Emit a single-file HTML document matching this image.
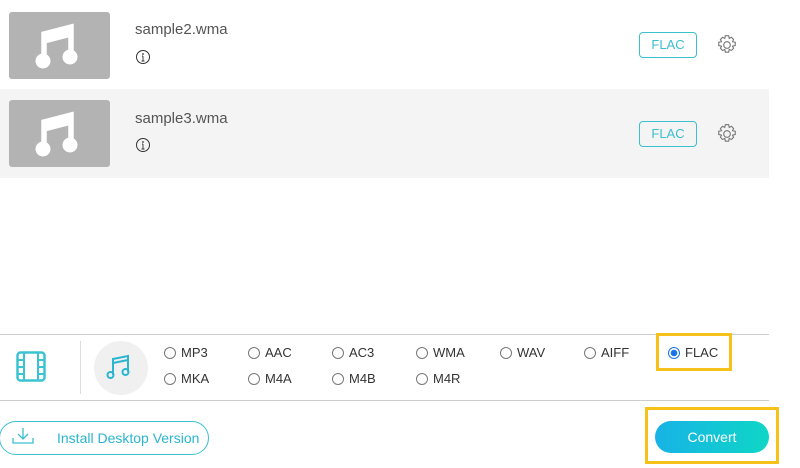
<!DOCTYPE html>
<html><head><style>
body{margin:0;width:800px;height:468px;background:#fff;font-family:"Liberation Sans",sans-serif;position:relative;overflow:hidden}
.a{position:absolute}
.thumb{position:absolute;left:9px;width:101px;height:67px;background:#b3b3b3;border-radius:3px}
.fn{position:absolute;left:135px;font-size:15px;color:#555}
.badge{position:absolute;left:639px;width:56px;height:24px;border:1px solid #3cbfcf;border-radius:4px;color:#3cbfcf;font-size:13px;text-align:center;line-height:24px}
.r{position:absolute;font-size:13px;color:#333}
.r i{position:absolute;left:-17px;top:2px;width:10px;height:10px;border:1px solid #777;border-radius:50%}
</style></head><body>
<div class="a" style="left:0;top:89px;width:769px;height:89px;background:#f4f4f4"></div>

<div class="thumb" style="top:12px"></div>
<div class="thumb" style="top:100px"></div>
<svg class="a" style="left:35px;top:20px" width="44" height="52" viewBox="0 0 44 52"><path d="M9 14 L9 42 M36 7 L36 38 M9 14 L36 7 L36 14 L9 21Z" stroke="#fff" stroke-width="5.5" fill="#fff"/><circle cx="8" cy="41" r="7.5" fill="#fff"/><circle cx="35" cy="37" r="7.5" fill="#fff"/></svg>
<svg class="a" style="left:35px;top:108px" width="44" height="52" viewBox="0 0 44 52"><path d="M9 14 L9 42 M36 7 L36 38 M9 14 L36 7 L36 14 L9 21Z" stroke="#fff" stroke-width="5.5" fill="#fff"/><circle cx="8" cy="41" r="7.5" fill="#fff"/><circle cx="35" cy="37" r="7.5" fill="#fff"/></svg>

<div class="fn" style="top:21px">sample2.wma</div>
<div class="fn" style="top:110px">sample3.wma</div>
<svg class="a" style="left:135px;top:49px" width="16" height="16"><circle cx="8" cy="8" r="6.5" fill="none" stroke="#333"/><path d="M8 7v5M6.5 12h3M7 7h1" stroke="#333" stroke-width=".9"/><circle cx="8" cy="5" r=".9" fill="#333"/></svg>
<svg class="a" style="left:135px;top:137px" width="16" height="16"><circle cx="8" cy="8" r="6.5" fill="none" stroke="#333"/><path d="M8 7v5M6.5 12h3M7 7h1" stroke="#333" stroke-width=".9"/><circle cx="8" cy="5" r=".9" fill="#333"/></svg>

<div class="badge" style="top:32px">FLAC</div>
<div class="badge" style="top:121px">FLAC</div>
<svg class="a" style="left:716px;top:34px" width="22" height="22" viewBox="0 0 20 20"><path d="M8.5 1.5h3l.5 2.5 2-1 2 2-1 2 2.5.5v3l-2.5.5 1 2-2 2-2-1-.5 2.5h-3l-.5-2.5-2 1-2-2 1-2-2.5-.5v-3l2.5-.5-1-2 2-2 2 1z" fill="none" stroke="#777"/><circle cx="10" cy="10" r="3" fill="none" stroke="#777"/></svg>
<svg class="a" style="left:716px;top:123px" width="22" height="22" viewBox="0 0 20 20"><path d="M8.5 1.5h3l.5 2.5 2-1 2 2-1 2 2.5.5v3l-2.5.5 1 2-2 2-2-1-.5 2.5h-3l-.5-2.5-2 1-2-2 1-2-2.5-.5v-3l2.5-.5-1-2 2-2 2 1z" fill="none" stroke="#777"/><circle cx="10" cy="10" r="3" fill="none" stroke="#777"/></svg>

<div class="a" style="left:0;top:334px;width:769px;height:1px;background:#ccc"></div>
<div class="a" style="left:0;top:400px;width:769px;height:1px;background:#ccc"></div>
<div class="a" style="left:80px;top:341px;width:1px;height:53px;background:#ddd"></div>
<svg class="a" style="left:16px;top:351px" width="30" height="32" viewBox="0 0 30 32"><rect x="1.5" y="1.5" width="27" height="28" rx="3" fill="none" stroke="#3cc3d3" stroke-width="2.5"/><path d="M8 2v28M22 2v28M2 9h6M2 16h6M2 23h6M22 9h6M22 16h6M22 23h6" stroke="#3cc3d3" stroke-width="2"/></svg>
<div class="a" style="left:94px;top:341px;width:54px;height:54px;border-radius:50%;background:#f0f0f0"></div>
<svg class="a" style="left:105px;top:352px" width="30" height="30" viewBox="0 0 30 30"><path d="M8 23V7l15-3v16M8 11l15-3" fill="none" stroke="#2bb5cf" stroke-width="2"/><circle cx="5.5" cy="23" r="3" fill="none" stroke="#2bb5cf" stroke-width="2"/><circle cx="20.5" cy="20" r="3" fill="none" stroke="#2bb5cf" stroke-width="2"/></svg>

<div class="r" style="left:181px;top:345px"><i></i>MP3</div>
<div class="r" style="left:265px;top:345px"><i></i>AAC</div>
<div class="r" style="left:349px;top:345px"><i></i>AC3</div>
<div class="r" style="left:433px;top:345px"><i></i>WMA</div>
<div class="r" style="left:517px;top:345px"><i></i>WAV</div>
<div class="r" style="left:601px;top:345px"><i></i>AIFF</div>
<div class="r" style="left:685px;top:345px"><i style="border-color:#1a73e8;background:radial-gradient(#1a73e8 3px,#fff 3.5px)"></i>FLAC</div>
<div class="r" style="left:181px;top:371px"><i></i>MKA</div>
<div class="r" style="left:265px;top:371px"><i></i>M4A</div>
<div class="r" style="left:349px;top:371px"><i></i>M4B</div>
<div class="r" style="left:433px;top:371px"><i></i>M4R</div>
<div class="a" style="left:656px;top:333px;width:70px;height:32px;border:3px solid #f6c21a"></div>

<div class="a" style="left:-1px;top:421px;width:208px;height:32px;border:1px solid #3cbfcf;border-radius:17px"></div>
<svg class="a" style="left:11px;top:426px" width="24" height="20" viewBox="0 0 24 20"><path d="M12 2v11M7 8l5 5 5-5M2 12v5h20v-5" fill="none" stroke="#3cbfcf" stroke-width="1.3"/></svg>
<div class="a" style="left:57px;top:430px;font-size:14px;color:#2bb5cf">Install Desktop Version</div>

<div class="a" style="left:645px;top:407px;width:128px;height:51px;border:3px solid #f6c21a"></div>
<div class="a" style="left:655px;top:421px;width:114px;height:32px;border-radius:16px;background:linear-gradient(90deg,#17b3e6,#0fd6c6);color:#fff;font-size:14px;text-align:center;line-height:32px">Convert</div>
</body></html>
